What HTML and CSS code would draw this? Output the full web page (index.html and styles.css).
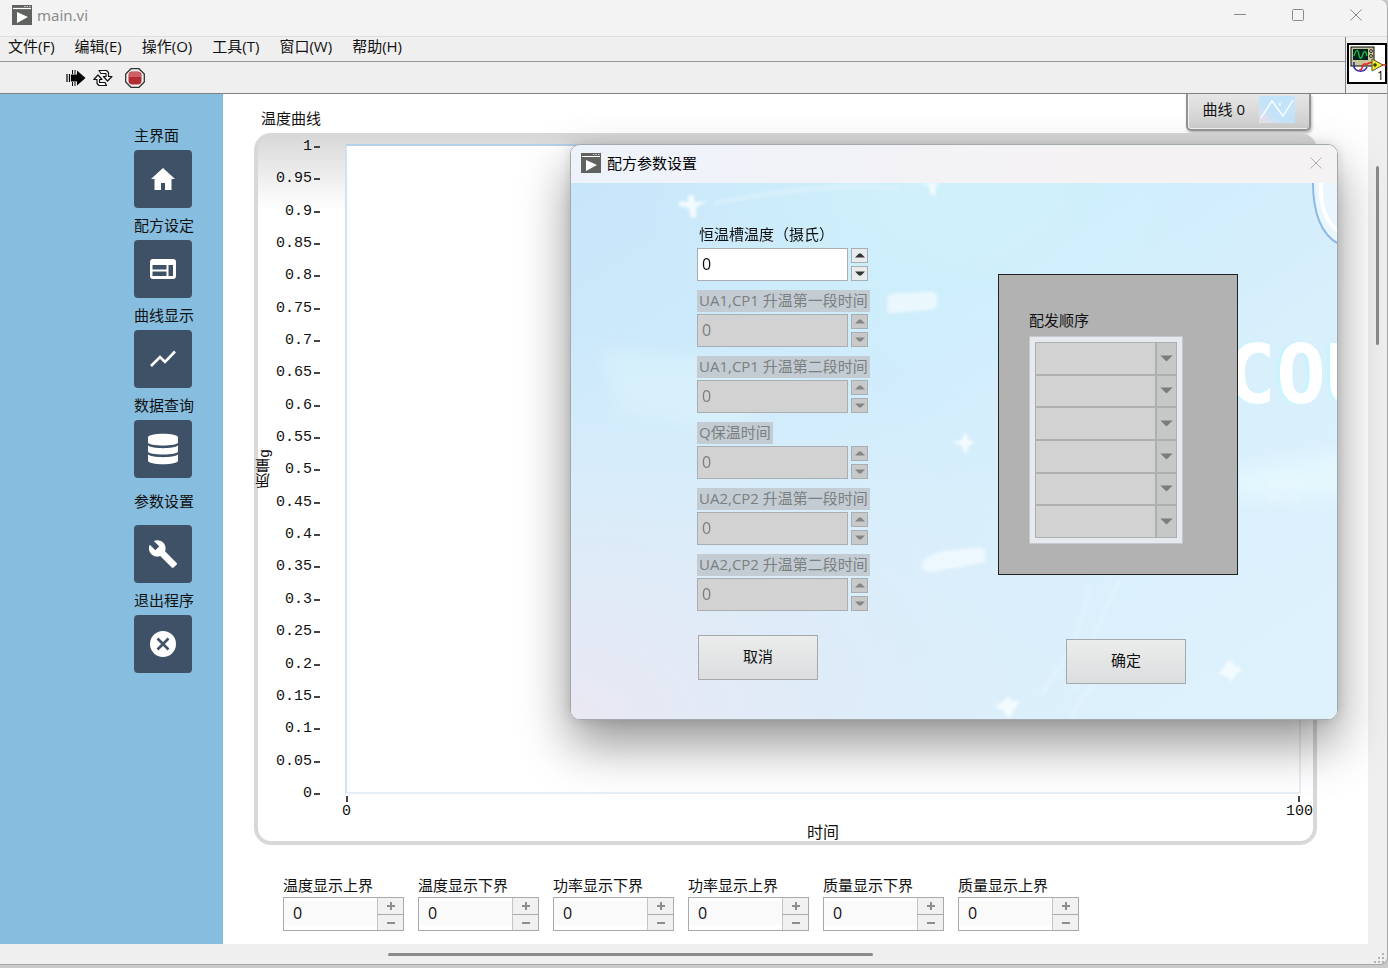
FILE: index.html
```html
<!DOCTYPE html>
<html lang="zh-CN">
<head>
<meta charset="utf-8">
<title>main.vi</title>
<link rel="stylesheet" href="styles.css">
</head>
<body>
<svg class="defs" aria-hidden="true">
  <symbol id="vi" viewBox="0 0 20 20">
    <rect width="20" height="20" fill="#5f625f"/>
    <path d="M1 3.5h18" stroke="#fff" stroke-width="1.2"/>
    <path d="M12 1.5h1.5M14.5 1.5h1.5M17 1.5h1.5" stroke="#ccc"/>
    <path d="M5 7l11 5-11 6z" fill="#fff"/>
  </symbol>
  <symbol id="x" viewBox="0 0 12 12"><path d="M.5.5l11 11M11.5.5l-11 11" stroke="currentColor" fill="none"/></symbol>
  <symbol id="up" viewBox="0 0 10 5"><path d="M0 4.5L4 .5h2l4 4z" fill="currentColor"/></symbol>
  <symbol id="down" viewBox="0 0 10 5"><path d="M0 .5L4 4.5h2l4-4z" fill="currentColor"/></symbol>
  <symbol id="drop" viewBox="0 0 14 8"><path d="M0 .5h14L7 7.5z" fill="currentColor"/></symbol>
  <symbol id="plus" viewBox="0 0 8 8"><path d="M0 4h8M4 0v8" stroke="currentColor" stroke-width="2"/></symbol>
  <symbol id="minus" viewBox="0 0 8 8"><path d="M0 4h8" stroke="currentColor" stroke-width="2"/></symbol>
</svg>

<div class="window">
  <header class="titlebar">
    <svg class="vi-icon"><use href="#vi"/></svg>
    <span class="window-title">main.vi</span>
    <button class="win-btn" aria-label="最小化"><svg width="12" height="12" viewBox="0 0 12 12"><path d="M0 5.5h12" stroke="currentColor"/></svg></button>
    <button class="win-btn" aria-label="最大化"><svg width="12" height="12" viewBox="0 0 12 12"><rect x=".5" y=".5" width="11" height="11" rx="1" fill="none" stroke="currentColor"/></svg></button>
    <button class="win-btn" aria-label="关闭"><svg width="12" height="12"><use href="#x"/></svg></button>
  </header>

  <div class="bars">
    <div class="bars-left">
      <nav class="menu">
        <button>文件(F)</button><button>编辑(E)</button><button>操作(O)</button><button>工具(T)</button><button>窗口(W)</button><button>帮助(H)</button>
      </nav>
      <div class="toolbar">
        <button aria-label="运行"><svg width="20" height="18" viewBox="0 0 20 18"><path d="M1 5v8M3.5 5v8" stroke="#000" stroke-width="1.2"/><path d="M5 5.5h6V1.5L19.500 9 11 16.500v-4H5z"/><path d="M6.500 1v4M9 1v4M6.500 13v4M9 13v4" stroke="#000"/></svg></button>
        <button aria-label="连续运行"><svg width="20" height="18" viewBox="0 0 20 18" fill="#fff" stroke="#111" stroke-width="1.200" stroke-linejoin="round"><path d="M6 1.500h7.500l2 2v4h3.500L14.500 12 10.500 7.500H13V4.500H8z"/><path d="M13.500 16.500H6l-2-2v-4H.8L5 6l4 4.500H6.500v3H12z"/></svg></button>
        <button class="stop" aria-label="中止"><svg width="20" height="20" viewBox="0 0 20 20"><path d="M6 .7h8L19.300 6v8L14 19.300H6L.7 14V6z" fill="#f4f0f0" stroke="#333" stroke-width="1.300"/><rect x="3.500" y="3.500" width="13" height="13" rx="4" fill="#b02c30"/><path d="M4 9V7a3 3 0 0 1 3-3h6a3 3 0 0 1 3 3v2z" fill="#cc6064"/></svg></button>
      </div>
    </div>
    <div class="connector">
      <svg width="40" height="41" viewBox="0 0 40 41">
        <rect x="1" y="1" width="38" height="39" fill="#fff" stroke="#000" stroke-width="2"/>
        <rect x="4" y="4" width="23" height="19" fill="#c9c79a" stroke="#000"/>
        <rect x="6" y="6" width="15" height="11" fill="#022"/>
        <path d="M7 13c2-7 4-7 5-1s3 3 4-1 3-3 4 2" fill="none" stroke="#1db53a" stroke-width="1.500"/>
        <circle cx="24" cy="8" r="1.500" fill="none" stroke="#333"/><circle cx="24" cy="13" r="1.500" fill="none" stroke="#333"/>
        <path d="M7 19v5c2 5 10 6 13 0" fill="none" stroke="#22a" stroke-width="1.500"/>
        <path d="M12 27c5 1 2-7 6-6s3-3 8-1M34 22h5" fill="none" stroke="#e22" stroke-width="1.500"/>
        <path d="M25 16l11 6-11 6z" fill="#ee2" stroke="#554"/><path d="M26 22h4M28 20v4" stroke="#000"/>
        <text class="connector-no" x="30" y="37">1</text>
      </svg>
    </div>
  </div>

  <div class="workspace">
    <aside class="sidebar">
      <div class="nav-item"><label for="n1">主界面</label><button id="n1"><svg width="24" height="22" viewBox="0 0 24 22"><path d="M12 0l12 11h-3.500v11H14v-7h-4v7H3.500V11H0z"/></svg></button></div>
      <div class="nav-item"><label for="n2">配方设定</label><button id="n2"><svg width="26" height="22" viewBox="0 0 26 22"><path fill-rule="evenodd" d="M3 1h20a3 3 0 0 1 3 3v14a3 3 0 0 1-3 3H3a3 3 0 0 1-3-3V4a3 3 0 0 1 3-3zM2.500 7v4.500h14V7zM2.500 13.500V18h14v-4.500zM18.500 7v11h4.500V7z"/></svg></button></div>
      <div class="nav-item"><label for="n3">曲线显示</label><button id="n3"><svg width="26" height="18" viewBox="0 0 26 18"><path d="M1 16l9-9 5 5L25 1.500" fill="none" stroke="#fff" stroke-width="2.600"/></svg></button></div>
      <div class="nav-item"><label for="n4">数据查询</label><button id="n4"><svg width="30" height="32" viewBox="0 0 30 32"><path d="M0 4.500C0-.5 30-.5 30 4.500v5c0 4-30 4-30 0zM0 12.500c4 3.500 26 3.500 30 0v6c0 4-30 4-30 0zM0 21.500c4 3.500 26 3.500 30 0v6c0 5-30 5-30 0z"/></svg></button></div>
      <div class="nav-item nav-item-wide"><label for="n5">参数设置</label><button id="n5"><svg width="28" height="28" viewBox="1 1 22 22"><path d="M22.700 19l-9.100-9.100c.9-2.300.4-5-1.500-6.900-2-2-5-2.400-7.400-1.300L9 6 6 9 1.600 4.700C.4 7.100.9 10.100 2.900 12.100c1.900 1.900 4.600 2.400 6.900 1.500l9.100 9.100c.4.4 1 .4 1.400 0l2.300-2.300c.5-.4.5-1.100.1-1.400z"/></svg></button></div>
      <div class="nav-item"><label for="n6">退出程序</label><button id="n6"><svg width="26" height="26" viewBox="0 0 26 26"><circle cx="13" cy="13" r="13"/><path d="M7.500 7.500l11 11M18.500 7.500l-11 11" stroke="#3f5166" stroke-width="2.600"/></svg></button></div>
    </aside>

    <main class="panel">
      <div class="chart-head">
        <h1>温度曲线</h1>
        <button class="legend">曲线 0
          <svg width="36" height="27" viewBox="0 0 36 27"><defs><linearGradient id="lg" x1="0" y1="1" x2="1" y2="0"><stop offset="0" stop-color="#f3dfe8"/><stop offset=".35" stop-color="#c5e3f8"/><stop offset="1" stop-color="#c2e4fa"/></linearGradient></defs><rect width="36" height="27" fill="url(#lg)"/><path d="M2 22L13 5l11 15L34 4M21 10v-3" fill="none" stroke="#fff" stroke-width="1.300"/></svg>
        </button>
      </div>

      <section class="chart">
        <div class="y-title">质量g</div>
        <ol class="y-axis">
          <li>1</li><li>0.95</li><li>0.9</li><li>0.85</li><li>0.8</li><li>0.75</li><li>0.7</li><li>0.65</li><li>0.6</li><li>0.55</li><li>0.5</li><li>0.45</li><li>0.4</li><li>0.35</li><li>0.3</li><li>0.25</li><li>0.2</li><li>0.15</li><li>0.1</li><li>0.05</li><li>0</li>
        </ol>
        <div class="plot"></div>
        <ol class="x-axis"><li>0</li><li>100</li></ol>
        <div class="x-title">时间</div>
      </section>

      <div class="limits">
        <div class="limit"><label for="l1">温度显示上界</label><div class="stepper"><input id="l1" value="0"><button aria-label="增加"><svg width="8" height="8"><use href="#plus"/></svg></button><button aria-label="减少"><svg width="8" height="8"><use href="#minus"/></svg></button></div></div>
        <div class="limit"><label for="l2">温度显示下界</label><div class="stepper"><input id="l2" value="0"><button aria-label="增加"><svg width="8" height="8"><use href="#plus"/></svg></button><button aria-label="减少"><svg width="8" height="8"><use href="#minus"/></svg></button></div></div>
        <div class="limit"><label for="l3">功率显示下界</label><div class="stepper"><input id="l3" value="0"><button aria-label="增加"><svg width="8" height="8"><use href="#plus"/></svg></button><button aria-label="减少"><svg width="8" height="8"><use href="#minus"/></svg></button></div></div>
        <div class="limit"><label for="l4">功率显示上界</label><div class="stepper"><input id="l4" value="0"><button aria-label="增加"><svg width="8" height="8"><use href="#plus"/></svg></button><button aria-label="减少"><svg width="8" height="8"><use href="#minus"/></svg></button></div></div>
        <div class="limit"><label for="l5">质量显示下界</label><div class="stepper"><input id="l5" value="0"><button aria-label="增加"><svg width="8" height="8"><use href="#plus"/></svg></button><button aria-label="减少"><svg width="8" height="8"><use href="#minus"/></svg></button></div></div>
        <div class="limit"><label for="l6">质量显示上界</label><div class="stepper"><input id="l6" value="0"><button aria-label="增加"><svg width="8" height="8"><use href="#plus"/></svg></button><button aria-label="减少"><svg width="8" height="8"><use href="#minus"/></svg></button></div></div>
      </div>
    </main>
    <div class="vscroll"><div class="vthumb"></div></div>
  </div>

  <footer class="hscroll">
    <div class="hthumb"></div>
    <svg class="grip" width="11" height="11" viewBox="0 0 11 11" fill="#b4b4b4"><path d="M8 0h2v2H8zM4 4h2v2H4zM8 4h2v2H8zM0 8h2v2H0zM4 8h2v2H4zM8 8h2v2H8z"/></svg>
  </footer>
</div>

<section class="dialog" role="dialog" aria-labelledby="dt">
  <header class="dialog-bar">
    <svg class="vi-icon"><use href="#vi"/></svg>
    <h2 id="dt">配方参数设置</h2>
    <button aria-label="关闭"><svg width="12" height="12"><use href="#x"/></svg></button>
  </header>
  <div class="dialog-body">
    <svg class="art" viewBox="0 0 766 534" preserveAspectRatio="xMaxYMin slice" aria-hidden="true">
      <defs>
        <linearGradient id="sky" x1="0" y1="0" x2="1" y2="1"><stop offset="0" stop-color="#c8e6f9"/><stop offset=".3" stop-color="#cdebfc"/><stop offset=".6" stop-color="#d8effc"/><stop offset="1" stop-color="#def2fc"/></linearGradient>
        <radialGradient id="haze" cx="0" cy="1" r=".75"><stop offset="0" stop-color="#eae8f3"/><stop offset=".45" stop-color="#e0ebf7" stop-opacity=".8"/><stop offset="1" stop-color="#dceefa" stop-opacity="0"/></radialGradient>
        <radialGradient id="aqua" cx=".5" cy="0" r=".4"><stop offset="0" stop-color="#d0f1fb"/><stop offset="1" stop-color="#d0f1fb" stop-opacity="0"/></radialGradient>
        <filter id="soft" x="-20%" y="-20%" width="140%" height="140%"><feGaussianBlur stdDeviation="1.500"/></filter>
        <filter id="mist" x="-30%" y="-60%" width="160%" height="220%"><feGaussianBlur stdDeviation="9"/></filter>
      </defs>
      <rect width="766" height="534" fill="url(#sky)"/>
      <rect width="766" height="534" fill="url(#aqua)"/>
      <rect width="766" height="534" fill="url(#haze)"/>
      <g filter="url(#mist)" fill="#e6f9fe" opacity=".7"><path d="M660 285l120-20v50H660z"/><path d="M30 165l220 15-90 70-110-20z" opacity=".5"/></g>
      <g fill="none" stroke="#e8f6fd" stroke-width="5" opacity=".4" filter="url(#soft)"><path d="M520 400q-10 60-50 110M550 395q-30 60-45 110M145 20Q260-2 330 6M560 470q-40 25-60 64"/></g>
      <g fill="#f3fbff" filter="url(#soft)">
        <path d="M110 18l9 1 1-7 5 0 1 7 12-1-10 6-1 11-5-1-2-9-10-2zM351 0h20l-5 3 0 10-5-2-1-8zM396 247l3 9 7 2-7 4-3 9-4-9-9-4 9-2zM659 474l4 6 9 4-6 5-5 8-4-5-9-3 5-6zM434 516l5-5 3 5 8 0-5 8-6 10-5-8-9-4z"/>
        <path d="M318 114q2-4 8-4l36-2q6 1 6 9t-5 9l-40 4q-5 0-5-4zM353 378q4-8 20-11l38-4q5 1 5 9l-1 6-55 10q-9-1-7-10z" opacity=".75"/>
        <path d="M695 295h36v8h-36zM695 310h36v8h-36z" opacity=".25"/>
      </g>
      <path d="M742-2c0 30 7 53 26 63V-2z" fill="#eaf6fe" stroke="#8db9e8" stroke-width="2"/>
      <path d="M750 0c-1 22 5 40 18 48" fill="none" stroke="#fff" stroke-width="4"/>
      <text class="lettering" x="656" y="219">COU</text>
    </svg>

    <form class="recipe">
      <div class="field"><label for="r1">恒温槽温度（摄氏）</label><div class="num"><input id="r1" value="0"><button type="button" aria-label="增加"><svg width="10" height="5"><use href="#up"/></svg></button><button type="button" aria-label="减少"><svg width="10" height="5"><use href="#down"/></svg></button></div></div>
      <div class="field off"><label for="r2">UA1,CP1 升温第一段时间</label><div class="num"><input id="r2" value="0" disabled><button type="button" disabled aria-label="增加"><svg width="10" height="5"><use href="#up"/></svg></button><button type="button" disabled aria-label="减少"><svg width="10" height="5"><use href="#down"/></svg></button></div></div>
      <div class="field off"><label for="r3">UA1,CP1 升温第二段时间</label><div class="num"><input id="r3" value="0" disabled><button type="button" disabled aria-label="增加"><svg width="10" height="5"><use href="#up"/></svg></button><button type="button" disabled aria-label="减少"><svg width="10" height="5"><use href="#down"/></svg></button></div></div>
      <div class="field off"><label for="r4">Q保温时间</label><div class="num"><input id="r4" value="0" disabled><button type="button" disabled aria-label="增加"><svg width="10" height="5"><use href="#up"/></svg></button><button type="button" disabled aria-label="减少"><svg width="10" height="5"><use href="#down"/></svg></button></div></div>
      <div class="field off"><label for="r5">UA2,CP2 升温第一段时间</label><div class="num"><input id="r5" value="0" disabled><button type="button" disabled aria-label="增加"><svg width="10" height="5"><use href="#up"/></svg></button><button type="button" disabled aria-label="减少"><svg width="10" height="5"><use href="#down"/></svg></button></div></div>
      <div class="field off"><label for="r6">UA2,CP2 升温第二段时间</label><div class="num"><input id="r6" value="0" disabled><button type="button" disabled aria-label="增加"><svg width="10" height="5"><use href="#up"/></svg></button><button type="button" disabled aria-label="减少"><svg width="10" height="5"><use href="#down"/></svg></button></div></div>
      <button type="button" class="action cancel">取消</button>
    </form>

    <div class="sequence">
      <fieldset class="seq-panel">
        <div class="seq-title" id="st">配发顺序</div>
        <div class="seq-list">
          <div class="combo"><select disabled aria-labelledby="st"></select><span><svg width="13" height="7"><use href="#drop"/></svg></span></div>
          <div class="combo"><select disabled aria-labelledby="st"></select><span><svg width="13" height="7"><use href="#drop"/></svg></span></div>
          <div class="combo"><select disabled aria-labelledby="st"></select><span><svg width="13" height="7"><use href="#drop"/></svg></span></div>
          <div class="combo"><select disabled aria-labelledby="st"></select><span><svg width="13" height="7"><use href="#drop"/></svg></span></div>
          <div class="combo"><select disabled aria-labelledby="st"></select><span><svg width="13" height="7"><use href="#drop"/></svg></span></div>
          <div class="combo"><select disabled aria-labelledby="st"></select><span><svg width="13" height="7"><use href="#drop"/></svg></span></div>
        </div>
      </fieldset>
      <button type="button" class="action confirm">确定</button>
    </div>
  </div>
</section>
</body>
</html>
```

FILE: styles.css
```css
* { box-sizing: border-box; }

body {
  margin: 0;
  height: 100vh;
  overflow: hidden;
  position: relative;
  background: #cacaca;
  color: #111;
  font: 15px/20px "Open Sans", "Noto Sans CJK SC", sans-serif;
}

button, input, select {
  font: inherit;
  color: inherit;
  margin: 0;
  padding: 0;
  border: 0;
  border-radius: 0;
  background: none;
  min-width: 0;
}

h1, h2, ol { margin: 0; padding: 0; font-size: inherit; font-weight: 400; list-style: none; }
svg { display: block; }
.defs { position: absolute; width: 0; height: 0; }
.vi-icon { width: 20px; height: 20px; flex: none; }

/* Main window */
.window {
  height: calc(100vh - 3px);
  display: flex;
  flex-direction: column;
  background: #efefef;
  border-right: 1px solid #a8a8a8;
  border-bottom: 1px solid #a8a8a8;
  border-radius: 0 8px 8px 0;
}

.titlebar {
  display: flex;
  align-items: center;
  height: 37px;
  padding: 0 2px 6px 12px;
  background: #f3f3f3;
  border-bottom: 1px solid #dedede;
  border-radius: 0 8px 0 0;
}
.window-title { flex: 1; margin-left: 5px; color: #8b8b8b; font-family: "Noto Sans", sans-serif; }
.win-btn { width: 58px; height: 30px; display: grid; place-items: center; color: #8a8a8a; }

.bars { display: flex; border-bottom: 1px solid #808080; }
.bars-left { flex: 1; }
.menu {
  display: flex;
  gap: 20px;
  padding: 0 8px 6px;
  line-height: 18px;
  border-bottom: 1px solid #999;
}
.toolbar {
  display: flex;
  align-items: center;
  gap: 7px;
  height: 31px;
  padding-left: 66px;
}
.toolbar .stop { margin-left: 5px; }
.connector { border-left: 1px solid #808080; padding: 6px 0 0 1px; width: 42px; }
.connector-no { font-size: 12px; }

.workspace { flex: 1; display: flex; min-height: 0; }

.sidebar {
  width: 223px;
  padding: 31px 0 0 134px;
  display: flex;
  flex-direction: column;
  gap: 7px;
  background: #87bddf;
}
.nav-item { display: grid; gap: 5px; justify-items: start; }
.nav-item-wide { gap: 14px; margin-top: 6px; }
.nav-item button {
  width: 58px;
  height: 58px;
  display: grid;
  place-items: center;
  background: #3f5166;
  border-radius: 4px;
  fill: #fff;
}

.panel {
  flex: 1;
  display: flex;
  flex-direction: column;
  padding: 0 51px 13px 31px;
  background: #fff;
}
.chart-head {
  display: flex;
  justify-content: space-between;
  align-items: flex-start;
  height: 39px;
  padding: 0 6px 0 7px;
}
.chart-head h1 { padding-top: 14px; }
.legend {
  display: flex;
  align-items: center;
  gap: 14px;
  height: 37px;
  padding: 0 14px 5px 15px;
  border: 2px solid #949494;
  border-top: 0;
  border-radius: 0 0 5px 5px;
  background: linear-gradient(#e6e6e6, #cdcdcd);
  box-shadow: inset 1px -1px 0 #f2f2f2, 1px 2px 3px #bbb;
}

.chart {
  flex: 1;
  min-height: 0;
  display: grid;
  grid-template-columns: 16px 46px 1fr;
  grid-template-rows: 1fr 28px 19px;
  padding: 7px 12px 0 0;
  border: 4px solid #d8d8d8;
  border-radius: 17px;
  background: linear-gradient(#d9d9d9, #fff 72px);
}
.y-title {
  writing-mode: vertical-rl;
  transform: rotate(180deg);
  justify-self: center;
  align-self: center;
  line-height: 16px;
  font-family: "Liberation Mono", "Noto Sans CJK SC", monospace;
}
.y-axis {
  display: flex;
  flex-direction: column;
  justify-content: space-between;
  margin: -5px 0 -8px;
  text-align: right;
  font: 15px/16px "Liberation Mono", monospace;
}
.y-axis li { display: flex; justify-content: flex-end; align-items: center; gap: 2px; }
.y-axis li::after { content: ""; width: 6px; height: 2px; background: #444; }
.plot {
  margin-left: 25px;
  border: 2px solid;
  border-color: #b5d2ea #e9eef6 #e6eef8 #cfe3f4;
  background: #fff;
}
.x-axis {
  grid-column: 3;
  display: flex;
  justify-content: space-between;
  margin: 0 -12px 0 22px;
  padding-top: 2px;
  font: 15px/20px "Liberation Mono", monospace;
}
.x-axis li { display: grid; justify-items: center; align-content: start; }
.x-axis li::before { content: ""; width: 2px; height: 6px; background: #444; }
.x-title { grid-column: 3; margin-left: 25px; text-align: center; font-size: 16px; }

.limits { display: flex; gap: 14px; margin-top: 30px; padding-left: 29px; }
.limit { display: grid; gap: 2px; width: 121px; }
.stepper {
  display: grid;
  grid-template-columns: 1fr 26px;
  grid-template-rows: 1fr 1fr;
  height: 34px;
  border: 1px solid #a9a9b0;
}
.stepper input {
  grid-row: 1 / 3;
  width: 100%;
  padding-left: 9px;
  font-size: 16px;
  background: #fafafa;
  border: solid #fff;
  border-width: 3px 0 5px 0;
}
.stepper button {
  display: grid;
  place-items: center;
  background: #f1f1f2;
  border-left: 1px solid #c4c4c8;
  color: #8d8d8d;
}
.stepper button + button { border-top: 1px solid #a9a9b0; }

.vscroll { width: 19px; padding: 72px 0 0 8px; background: #efefef; }
.vthumb { width: 3px; height: 23%; border-radius: 2px; background: #8a8a8a; }
.hscroll { display: flex; align-items: center; height: 20px; padding-right: 2px; }
.hthumb { width: 35%; height: 3px; margin: 0 auto 0 28%; border-radius: 2px; background: #8a8a8a; }
.grip { align-self: flex-end; }

/* Recipe dialog */
.dialog {
  position: absolute;
  left: 570px;
  top: 144px;
  width: 768px;
  border: 1px solid #a3a8ad;
  border-radius: 10px;
  overflow: hidden;
  box-shadow: 0 24px 50px rgba(0, 0, 0, .42), 0 0 12px rgba(0, 0, 0, .12);
}
.dialog-bar {
  display: flex;
  align-items: center;
  gap: 6px;
  height: 38px;
  padding: 0 15px 2px 10px;
  background: linear-gradient(90deg, #eef3fb, #f5f2f3 70%);
  color: #000;
}
.dialog-bar h2 { flex: 1; }
.dialog-bar button { color: #b0b0b0; }

.dialog-body {
  position: relative;
  display: flex;
  justify-content: space-between;
  padding: 41px 99px 35px 126px;
}
.art { position: absolute; inset: 0; width: 100%; height: 100%; }
.lettering {
  font: 700 82px "DejaVu Sans Mono", monospace;
  fill: #fff;
  text-shadow: -3px 0 2px #c4f6ff;
}

.recipe, .sequence { position: relative; display: flex; flex-direction: column; }
.recipe { gap: 9px; }
.field { display: grid; gap: 2px; justify-items: start; }
.field label { padding: 0 2px 1px; line-height: 21px; }
.field.off label { background: #c3ccd2; color: #7c7f81; }
.num {
  display: grid;
  grid-template-columns: 151px 17px;
  grid-template-rows: 15px 15px;
  gap: 3px;
}
.num input {
  grid-row: 1 / 3;
  width: 100%;
  padding: 0 0 2px 4px;
  font-size: 16px;
  background: #fff;
  border: 1px solid #a9aeb2;
}
.num button {
  display: grid;
  place-items: center;
  border: 1px solid #a9aeb2;
  background: #e9ecec;
  color: #333;
}
.off .num input { background: #d2d2d2; color: #7e7e7e; }
.off .num button { background: #c8c9c9; color: #858585; }

.action {
  width: 120px;
  height: 45px;
  padding-bottom: 4px;
  border: 1px solid #a6a9ab;
  background: linear-gradient(#ebedec, #dcdddf);
}
.cancel { margin: 15px 0 0 1px; }

.sequence { padding-top: 50px; }
.seq-panel {
  width: 240px;
  margin: 0;
  padding: 35px 54px 30px 30px;
  border: 1px solid #222;
  background: #b2b2b2;
}
.seq-list {
  display: grid;
  grid-template-rows: repeat(6, 1fr);
  height: 208px;
  margin-top: 6px;
  padding: 5px;
  border: 1px solid #c3c8cc;
  background: #e6eaee;
}
.combo {
  display: grid;
  grid-template-columns: 1fr 21px;
  border: 1px solid #adb0b1;
}
.combo select { appearance: none; width: 100%; background: #d2d2d2; opacity: 1; }
.combo span {
  display: grid;
  place-items: center;
  border-left: 2px solid #adb0b1;
  background: #c6c8c8;
  color: #7b7d7d;
}
.confirm { margin: 64px 0 0 68px; }
```
